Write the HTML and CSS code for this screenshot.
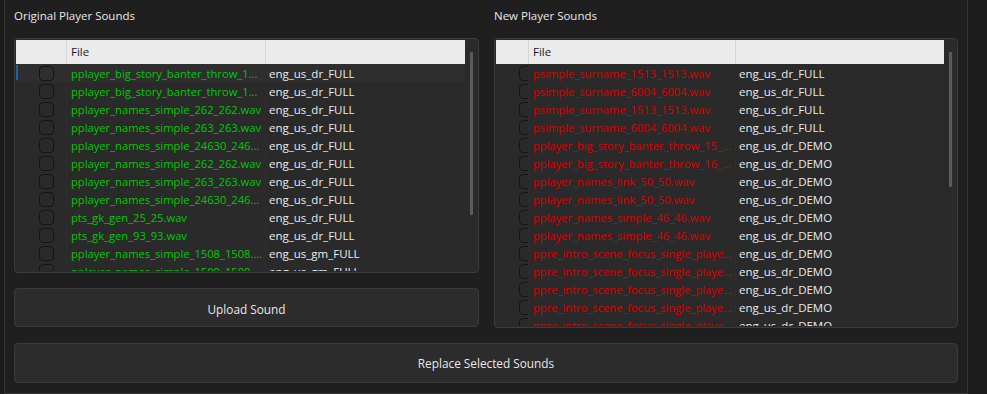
FILE: index.html
```html
<!DOCTYPE html>
<html>
<head>
<meta charset="utf-8">
<link rel="stylesheet" href="styles.css">
</head>
<body>
<div class="frame">
  <div class="panels">
    <section class="panel">
      <div class="title">Original Player Sounds</div>
      <div class="table table-left">
        <div class="inner">
          <div class="header cols-left">
            <div class="hc"></div><div class="hc">File</div><div class="hc"></div>
          </div>
          <div class="body">
            <div class="row cols-left current"><div class="ck"><span class="box"></span></div><div class="name green">pplayer_big_story_banter_throw_1...</div><div class="ver">eng_us_dr_FULL</div></div>
            <div class="row cols-left"><div class="ck"><span class="box"></span></div><div class="name green">pplayer_big_story_banter_throw_1...</div><div class="ver">eng_us_dr_FULL</div></div>
            <div class="row cols-left"><div class="ck"><span class="box"></span></div><div class="name green">pplayer_names_simple_262_262.wav</div><div class="ver">eng_us_dr_FULL</div></div>
            <div class="row cols-left"><div class="ck"><span class="box"></span></div><div class="name green">pplayer_names_simple_263_263.wav</div><div class="ver">eng_us_dr_FULL</div></div>
            <div class="row cols-left"><div class="ck"><span class="box"></span></div><div class="name green">pplayer_names_simple_24630_246...</div><div class="ver">eng_us_dr_FULL</div></div>
            <div class="row cols-left"><div class="ck"><span class="box"></span></div><div class="name green">pplayer_names_simple_262_262.wav</div><div class="ver">eng_us_dr_FULL</div></div>
            <div class="row cols-left"><div class="ck"><span class="box"></span></div><div class="name green">pplayer_names_simple_263_263.wav</div><div class="ver">eng_us_dr_FULL</div></div>
            <div class="row cols-left"><div class="ck"><span class="box"></span></div><div class="name green">pplayer_names_simple_24630_246...</div><div class="ver">eng_us_dr_FULL</div></div>
            <div class="row cols-left"><div class="ck"><span class="box"></span></div><div class="name green">pts_gk_gen_25_25.wav</div><div class="ver">eng_us_dr_FULL</div></div>
            <div class="row cols-left"><div class="ck"><span class="box"></span></div><div class="name green">pts_gk_gen_93_93.wav</div><div class="ver">eng_us_dr_FULL</div></div>
            <div class="row cols-left"><div class="ck"><span class="box"></span></div><div class="name green">pplayer_names_simple_1508_1508....</div><div class="ver">eng_us_gm_FULL</div></div>
            <div class="row cols-left"><div class="ck"><span class="box"></span></div><div class="name green">pplayer_names_simple_1509_1509....</div><div class="ver">eng_us_gm_FULL</div></div>
          </div>
          <div class="scroll scroll-left"></div>
        </div>
      </div>
      <button class="btn btn-upload">Upload Sound</button>
    </section>
    <section class="panel">
      <div class="title">New Player Sounds</div>
      <div class="table table-right">
        <div class="inner">
          <div class="header cols-right">
            <div class="hc"></div><div class="hc">File</div><div class="hc"></div>
          </div>
          <div class="body">
            <div class="row cols-right"><div class="ck"><span class="box"></span></div><div class="name red">psimple_surname_1513_1513.wav</div><div class="ver">eng_us_dr_FULL</div></div>
            <div class="row cols-right"><div class="ck"><span class="box"></span></div><div class="name red">psimple_surname_6004_6004.wav</div><div class="ver">eng_us_dr_FULL</div></div>
            <div class="row cols-right"><div class="ck"><span class="box"></span></div><div class="name red">psimple_surname_1513_1513.wav</div><div class="ver">eng_us_dr_FULL</div></div>
            <div class="row cols-right"><div class="ck"><span class="box"></span></div><div class="name red">psimple_surname_6004_6004.wav</div><div class="ver">eng_us_dr_FULL</div></div>
            <div class="row cols-right"><div class="ck"><span class="box"></span></div><div class="name red">pplayer_big_story_banter_throw_15_...</div><div class="ver">eng_us_dr_DEMO</div></div>
            <div class="row cols-right"><div class="ck"><span class="box"></span></div><div class="name red">pplayer_big_story_banter_throw_16_...</div><div class="ver">eng_us_dr_DEMO</div></div>
            <div class="row cols-right"><div class="ck"><span class="box"></span></div><div class="name red">pplayer_names_link_50_50.wav</div><div class="ver">eng_us_dr_DEMO</div></div>
            <div class="row cols-right"><div class="ck"><span class="box"></span></div><div class="name red">pplayer_names_link_50_50.wav</div><div class="ver">eng_us_dr_DEMO</div></div>
            <div class="row cols-right"><div class="ck"><span class="box"></span></div><div class="name red">pplayer_names_simple_46_46.wav</div><div class="ver">eng_us_dr_DEMO</div></div>
            <div class="row cols-right"><div class="ck"><span class="box"></span></div><div class="name red">pplayer_names_simple_46_46.wav</div><div class="ver">eng_us_dr_DEMO</div></div>
            <div class="row cols-right"><div class="ck"><span class="box"></span></div><div class="name red">ppre_intro_scene_focus_single_playe...</div><div class="ver">eng_us_dr_DEMO</div></div>
            <div class="row cols-right"><div class="ck"><span class="box"></span></div><div class="name red">ppre_intro_scene_focus_single_playe...</div><div class="ver">eng_us_dr_DEMO</div></div>
            <div class="row cols-right"><div class="ck"><span class="box"></span></div><div class="name red">ppre_intro_scene_focus_single_playe...</div><div class="ver">eng_us_dr_DEMO</div></div>
            <div class="row cols-right"><div class="ck"><span class="box"></span></div><div class="name red">ppre_intro_scene_focus_single_playe...</div><div class="ver">eng_us_dr_DEMO</div></div>
            <div class="row cols-right"><div class="ck"><span class="box"></span></div><div class="name red">ppre_intro_scene_focus_single_playe...</div><div class="ver">eng_us_dr_DEMO</div></div>
          </div>
          <div class="scroll scroll-right"></div>
        </div>
      </div>
    </section>
  </div>
  <button class="btn btn-replace">Replace Selected Sounds</button>
</div>
</body>
</html>
```
FILE: styles.css
```css
* { box-sizing: border-box; }
html, body {
  margin: 0;
  padding: 0;
  background: #1c1c1c;
  width: 987px;
  height: 394px;
  overflow: hidden;
  font-family: "Open Sans", "Noto Sans", sans-serif;
  font-size: 11.5px;
  color: #e6e6e6;
}
.frame {
  margin-left: 4px;
  width: 964px;
  height: 394px;
  background: #1f1f1f;
  border-left: 1px solid #353535;
  border-right: 1px solid #353535;
  border-bottom: 1px solid #353535;
  padding: 0 9px 0 9px;
  display: flex;
  flex-direction: column;
}
.panels {
  display: grid;
  grid-template-columns: 465px 464px;
  column-gap: 15px;
}
.panel {
  display: flex;
  flex-direction: column;
}
.title {
  height: 38px;
  padding-top: 7px;
  line-height: 18px;
  color: #e8e8e8;
}
.table {
  border: 1px solid #3c3c3c;
  border-radius: 4px;
  background: #2a2a2a;
  padding: 1px;
}
.table-left { height: 235px; }
.table-right { height: 290px; }
.inner {
  position: relative;
  height: 100%;
  overflow: hidden;
}
.header {
  display: grid;
  height: 24px;
  background: #ebebeb;
  color: #1a1a1a;
  margin-right: 12px;
}
.cols-left { grid-template-columns: 50px 199px 200px; }
.cols-right { grid-template-columns: 32px 207px 209px; }
.hc {
  border-left: 1px solid #d6d6d6;
  line-height: 24px;
  padding-left: 4px;
}
.hc:first-child { border-left: none; }
.body {
  display: flex;
  flex-direction: column;
  margin-right: 12px;
}
.row {
  display: grid;
  height: 18px;
  line-height: 18px;
  position: relative;
}
.row > div { overflow: hidden; white-space: nowrap; padding-top: 1px; }
.current {
  background: #2e2e2e;
  border-radius: 3px;
}
.current::before {
  content: "";
  position: absolute;
  left: 0;
  top: 1px;
  width: 2px;
  height: 15px;
  background: #1f5fa6;
}
.row > .ck {
  padding-left: 23px;
  padding-top: 2px;
}
.box {
  display: block;
  width: 15px;
  height: 15px;
  border: 1px solid #141414;
  border-radius: 4px;
}
.name {
  padding-left: 4px;
  border-left: 1px solid #2d2d2d;
  font-size: 11.2px;
}
.ver {
  padding-left: 3px;
  color: #ececec;
  border-left: 1px solid #2d2d2d;
}
.green { color: #00c800; }
.red { color: #dc0000; }
.scroll {
  position: absolute;
  width: 3px;
  right: 4px;
  top: 12px;
  background: #5c5c5c;
  border-radius: 1px;
}
.scroll-left { height: 163px; }
.scroll-right { height: 135px; }
.btn {
  font-family: inherit;
  font-size: 11.8px;
  color: #e8e8e8;
  background: #2c2c2c;
  border: 1px solid #3a3a3a;
  border-radius: 4px;
  padding: 0;
  cursor: default;
}
.btn-upload {
  margin-top: 15px;
  height: 39px;
  padding-top: 2px;
}
.btn-replace {
  margin-top: 15px;
  height: 40px;
  width: 944px;
}
```
